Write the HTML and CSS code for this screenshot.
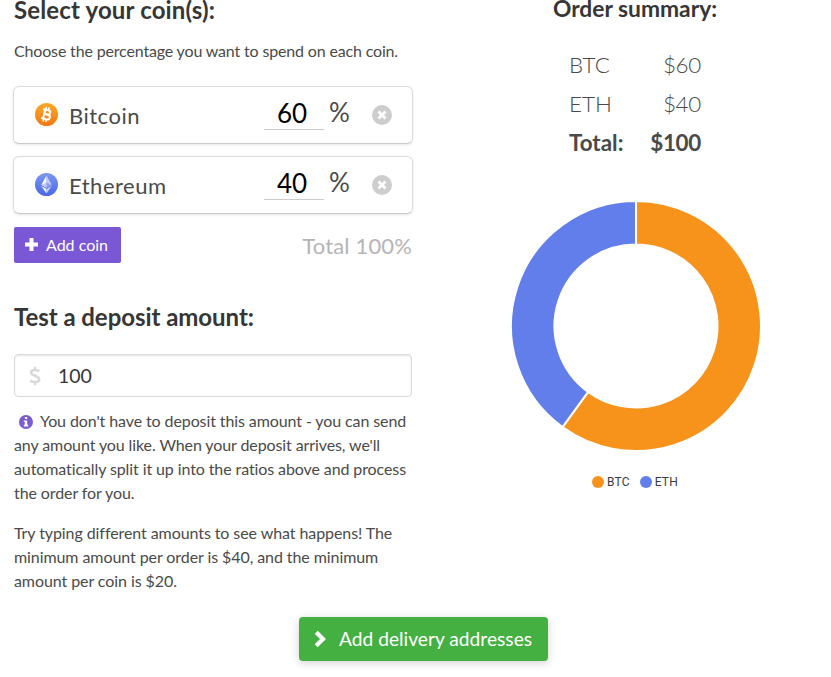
FILE: index.html
```html
<!DOCTYPE html>
<html lang="en">
<head>
  <meta charset="UTF-8">
  <meta name="viewport" content="width=device-width, initial-scale=1.0">
  <title>Select your coins</title>
  <link rel="stylesheet" href="styles.css">
</head>
<body>

  <div class="columns">
    <div class="left">
      <h2 class="select-title">Select your coin(s):</h2>
      <p class="intro">Choose the percentage you want to spend on each coin.</p>

      <div class="coin">
        <svg class="coin-icon" viewBox="0 0 24 24">
          <defs>
            <linearGradient id="btc" x1="0" y1="0" x2="0" y2="1">
              <stop offset="0" stop-color="#f9aa2b"/>
              <stop offset="1" stop-color="#f7760f"/>
            </linearGradient>
          </defs>
          <circle cx="12" cy="12" r="12" fill="url(#btc)"/>
          <g transform="rotate(13 12 12)" fill="none" stroke="#fff">
            <path d="M7.3 7.3H13a2.3 2.3 0 0 1 0 4.6H9.6M13 11.9h.6a2.5 2.5 0 0 1 0 5H7.3M9.6 7.3v9.6" stroke-width="2.2"/>
            <path d="M10.2 4.2v3M13 4.2v3M10.2 17v3M13 17v3" stroke-width="1.6"/>
          </g>
        </svg>
        <span class="coin-name">Bitcoin</span>
        <input class="percent" type="text" value="60">
        <span class="sign">%</span>
        <svg class="remove" viewBox="0 0 20 20">
          <circle cx="10" cy="10" r="10" fill="#cdcdcd"/>
          <path d="M6.5 6.5l7 7M13.5 6.5l-7 7" stroke="#fff" stroke-width="2.8"/>
        </svg>
      </div>

      <div class="coin">
        <svg class="coin-icon" viewBox="0 0 24 24">
          <defs>
            <linearGradient id="eth" x1="0" y1="0" x2="0" y2="1">
              <stop offset="0" stop-color="#7b98f0"/>
              <stop offset="1" stop-color="#4a67e4"/>
            </linearGradient>
          </defs>
          <circle cx="12" cy="12" r="12" fill="url(#eth)"/>
          <path d="M12 2.5L6.6 12.2l5.4 3.2z" fill="#f5f7fe"/>
          <path d="M12 2.5l5.4 9.7-5.4 3.2z" fill="#c3cef8"/>
          <path d="M6.6 12.2L12 9.8v5.6z" fill="#c3cef8"/>
          <path d="M17.4 12.2L12 9.8v5.6z" fill="#8da2f0"/>
          <path d="M6.6 13.6l5.4 3.2v4.7z" fill="#f5f7fe"/>
          <path d="M17.4 13.6L12 16.8v4.7z" fill="#c3cef8"/>
        </svg>
        <span class="coin-name">Ethereum</span>
        <input class="percent" type="text" value="40">
        <span class="sign">%</span>
        <svg class="remove" viewBox="0 0 20 20">
          <circle cx="10" cy="10" r="10" fill="#cdcdcd"/>
          <path d="M6.5 6.5l7 7M13.5 6.5l-7 7" stroke="#fff" stroke-width="2.8"/>
        </svg>
      </div>

      <div class="add-row">
        <button class="add-coin">
          <svg width="13" height="13" viewBox="0 0 13 13"><path d="M6.5 0v13M0 6.5h13" stroke="#fff" stroke-width="4"/></svg>
          <span>Add coin</span>
        </button>
        <span class="total-percent">Total 100%</span>
      </div>

      <h2 class="deposit-title">Test a deposit amount:</h2>
      <div class="deposit">
        <svg width="12" height="20" viewBox="0 0 12 20" fill="none" stroke="#d9d9d9">
          <path d="M10.2 5.4C7.6 3.3 2 3.2 2 6.6c0 3.6 8.2 2.6 8.2 6.6 0 3.6-6 3.8-9 1.2" stroke-width="2.6"/>
          <path d="M6 .8V4M6 16v3.2" stroke-width="2.2"/>
        </svg>
        <input class="amount" type="text" value="100">
      </div>

      <p class="note"><svg class="info" viewBox="0 0 14 14"><circle cx="7" cy="7" r="7" fill="#7a5bd1"/><path d="M5.9 2h2.3v2H5.9zM4.8 5.4h3.4v4.4h1v1.7H4.8V9.8h1V7.1h-1z" fill="#fff"/></svg>You don't have to deposit this amount - you can send any amount you like. When your deposit arrives, we'll automatically split it up into the ratios above and process the order for you.</p>
      <p class="note">Try typing different amounts to see what happens! The minimum amount per order is $40, and the minimum amount per coin is $20.</p>
    </div>

    <div class="right">
      <h2>Order summary:</h2>
      <table class="summary">
        <tr>
          <td>BTC</td>
          <td>$60</td>
        </tr>
        <tr>
          <td>ETH</td>
          <td>$40</td>
        </tr>
        <tr class="total">
          <td>Total:</td>
          <td>$100</td>
        </tr>
      </table>

      <svg class="chart" viewBox="-126 -126 252 252" stroke="#fff" stroke-width="2">
        <path d="M0-125A125 125 0 1 1-73.47 101.13L-47.9 65.94A81.5 81.5 0 1 0 0-81.5Z" fill="#f7931a"/>
        <path d="M-73.47 101.13A125 125 0 0 1 0-125V-81.5A81.5 81.5 0 0 0-47.9 65.94Z" fill="#627eea"/>
      </svg>
      <div class="legend">
        <span class="dot btc"></span><span>BTC</span>
        <span class="dot eth"></span><span>ETH</span>
      </div>
    </div>
  </div>

  <div class="footer">
    <button class="next">
      <svg width="13" height="18" viewBox="0 0 13 18"><path d="M2.2 2.2L9 9l-6.8 6.8" fill="none" stroke="#fff" stroke-width="4.2"/></svg>
      <span>Add delivery addresses</span>
    </button>
  </div>

</body>
</html>
```
FILE: styles.css
```css
* {
  box-sizing: border-box;
}

body {
  margin: 0;
  background-color: #fff;
  color: #4a4a4a;
  font-family: Lato, sans-serif;
  font-size: 16px;
  line-height: 24px;
}

h2 {
  margin: 0;
  color: #363636;
  font-size: 24px;
  font-weight: 700;
  line-height: 27px;
}

p {
  margin: 0;
}

input, button {
  font-family: inherit;
  border: none;
  outline: none;
}

.columns {
  display: flex;
  height: 617px;
}

.left {
  flex-shrink: 0;
  width: 398px;
  margin-left: 14px;
}

.select-title {
  line-height: 20px;
  letter-spacing: 0.15px;
}

.intro {
  margin-top: 19px;
  letter-spacing: -0.16px;
}

/* Coin cards */
.coin {
  display: flex;
  align-items: center;
  width: 400px;
  height: 58px;
  margin: 23px 0 0 -1px;
  padding: 0 20px 2px 21px;
  border: 1px solid #dcdcdc;
  border-bottom-color: #cacaca;
  border-radius: 6px;
  box-shadow: 0 1px 3px rgba(0, 0, 0, 0.1);
}

.coin + .coin {
  margin-top: 12px;
}

.coin-icon {
  width: 23px;
  height: 23px;
}

.coin-name {
  flex: 1;
  margin-left: 11px;
  padding-top: 4px;
  font-size: 22px;
  letter-spacing: 0.5px;
}

.percent {
  width: 60px;
  height: 32px;
  padding: 0 4px 2px 0;
  border-bottom: 1px solid #ccc;
  color: #000;
  font-size: 26px;
  text-align: center;
}

.sign {
  width: 48px;
  padding: 0 0 4px 5px;
  font-size: 26px;
}

.remove {
  width: 20px;
  height: 20px;
  margin-top: 2px;
}

.add-row {
  display: flex;
  justify-content: space-between;
  height: 36px;
  margin-top: 13px;
}

.add-coin {
  display: flex;
  align-items: center;
  width: 107px;
  padding: 0 0 1px 11px;
  gap: 8px;
  border-radius: 2px;
  background-color: #7957d5;
  color: #fff;
  font-size: 16px;
}

.total-percent {
  color: #b5b5b5;
  font-size: 22px;
  line-height: 37px;
  letter-spacing: 0.15px;
}

/* Deposit amount */
.deposit-title {
  margin-top: 40px;
  letter-spacing: -0.05px;
}

.deposit {
  display: flex;
  align-items: center;
  height: 43px;
  margin-top: 24px;
  padding-left: 14px;
  border: 1px solid #dbdbdb;
  border-radius: 4px;
  box-shadow: inset 0 1px 2px rgba(10, 10, 10, 0.1);
}

.amount {
  width: 340px;
  margin-left: 17px;
  padding: 0;
  background: none;
  color: #363636;
  font-size: 19.5px;
}

.note {
  margin-top: 12px;
  letter-spacing: -0.1px;
}

.note + .note {
  margin-top: 16px;
  letter-spacing: -0.08px;
}

.info {
  width: 14px;
  height: 14px;
  margin: 0 7px 0 5px;
  vertical-align: -2px;
}

/* Order summary */
.right {
  display: flex;
  flex-direction: column;
  align-items: center;
  width: 398px;
  margin-left: 24px;
  flex-shrink: 0;
}

.right h2 {
  font-size: 22.8px;
  line-height: 17px;
}

.summary {
  width: 132px;
  margin-top: 28px;
  border-collapse: collapse;
}

.summary td {
  height: 39px;
  padding: 0;
  font-size: 22.4px;
  font-weight: 300;
}

.summary td:last-child {
  text-align: right;
  letter-spacing: -0.3px;
}

.summary .total td {
  font-weight: 700;
}

.chart {
  width: 252px;
  height: 252px;
  margin: 38px 0 0 2px;
}

.legend {
  display: flex;
  align-items: center;
  margin-top: 22px;
  color: #373d3f;
  font-family: Roboto, Arial, sans-serif;
  font-size: 12px;
  line-height: 16px;
  letter-spacing: 0.2px;
}

.dot {
  width: 12px;
  height: 12px;
  margin-right: 3px;
  border-radius: 50%;
}

.dot.btc {
  background-color: #f7931a;
}

.dot.eth {
  margin-left: 10px;
  background-color: #627eea;
}

.footer {
  display: flex;
  justify-content: center;
  height: 60px;
  padding-left: 16px;
}

.next {
  display: flex;
  align-items: center;
  width: 249px;
  height: 44px;
  padding: 0 0 1px 15px;
  gap: 12px;
  border-radius: 4px;
  background-color: #43b041;
  box-shadow: 0 2px 8px rgba(0, 0, 0, 0.18);
  color: #fff;
  font-size: 19.2px;
}
```
